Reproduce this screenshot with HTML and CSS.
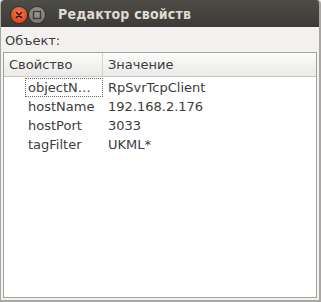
FILE: index.html
```html
<!DOCTYPE html>
<html>
<head>
<meta charset="utf-8">
<link rel="stylesheet" href="styles.css">
</head>
<body>
<div class="window">
  <div class="titlebar">
    <div class="buttons">
      <span class="btn close"><svg width="10" height="10" viewBox="0 0 10 10"><path d="M2.5 2.5 L7.5 7.5 M7.5 2.5 L2.5 7.5" stroke="#3a1a10" stroke-width="1.6" stroke-linecap="round"/></svg></span>
      <span class="btn mini"><svg width="10" height="10" viewBox="0 0 10 10"><rect x="1.5" y="1.5" width="7" height="7" fill="none" stroke="#3c3b37" stroke-width="1.4"/></svg></span>
    </div>
    <div class="title">Редактор свойств</div>
  </div>
  <div class="content">
    <div class="label">Объект:</div>
    <div class="frame">
      <div class="header">
        <div class="hcell col1">Свойство</div>
        <div class="hcell col2">Значение</div>
      </div>
      <div class="rows">
        <div class="row"><div class="cell col1"><span class="focus">objectN…</span></div><div class="cell col2">RpSvrTcpClient</div></div>
        <div class="row"><div class="cell col1"><span class="name">hostName</span></div><div class="cell col2">192.168.2.176</div></div>
        <div class="row"><div class="cell col1"><span class="name">hostPort</span></div><div class="cell col2">3033</div></div>
        <div class="row"><div class="cell col1"><span class="name">tagFilter</span></div><div class="cell col2">UKML*</div></div>
      </div>
    </div>
  </div>
</div>
</body>
</html>
```
FILE: styles.css
```css
html, body {
  margin: 0;
  padding: 0;
  background: #f2f1f0;
}
.window {
  width: 321px;
  height: 302px;
  box-sizing: border-box;
  border-left: 1px solid #a8a7a4;
  border-right: 2px solid #a8a7a4;
  border-bottom: 2px solid #a8a7a4;
  border-top-left-radius: 4px;
  border-top-right-radius: 4px;
  display: flex;
  flex-direction: column;
  background: #f2f1f0;
  font-family: "DejaVu Sans", sans-serif;
  color: #3c3c3c;
  overflow: hidden;
}
.titlebar {
  height: 27px;
  flex: none;
  box-sizing: border-box;
  padding-top: 3px;
  background: linear-gradient(#4d4c47, #3c3b37);
  display: flex;
  align-items: center;
  margin: 0 -2px 0 -1px;
  border-top-left-radius: 4px;
  border-top-right-radius: 4px;
}
.buttons {
  display: flex;
  gap: 2px;
  margin-left: 11px;
}
.btn {
  width: 16px;
  height: 16px;
  border-radius: 50%;
  display: flex;
  align-items: center;
  justify-content: center;
}
.close {
  background: radial-gradient(circle at 50% 35%, #f77a50, #df4a1e 70%, #c43e16);
  box-shadow: 0 0 0 1px #2e2d2a;
}
.mini {
  background: radial-gradient(circle at 50% 35%, #9a9893, #7d7b76 70%, #6c6a66);
  box-shadow: 0 0 0 1px #2e2d2a;
}
.title {
  margin-left: 13px;
  margin-top: -2px;
  font-family: "DejaVu Sans Condensed", "DejaVu Sans", sans-serif;
  font-stretch: condensed;
  font-weight: bold;
  font-size: 14px;
  color: #dfdbd2;
  letter-spacing: 0.2px;
}
.content {
  flex: 1;
  display: flex;
  flex-direction: column;
  padding: 0 2px 2px 2px;
}
.label {
  height: 25px;
  line-height: 28px;
  font-size: 13px;
  padding-left: 2px;
}
.frame {
  flex: 1;
  border: 1px solid #a5a39f;
  background: #ffffff;
  display: flex;
  flex-direction: column;
}
.header {
  display: flex;
  height: 23px;
  background: linear-gradient(#fbfbfa, #ebeae8);
  border-bottom: 1px solid #c8c6c2;
}
.hcell {
  font-size: 13px;
  line-height: 23px;
  box-sizing: border-box;
}
.col1 {
  width: 99px;
  flex: none;
}
.hcell.col1 {
  padding-left: 5px;
  border-right: 1px solid #d6d4d0;
}
.hcell.col2 {
  padding-left: 5px;
}
.rows {
  padding-top: 1px;
}
.row {
  display: flex;
  height: 19px;
}
.cell {
  font-size: 13px;
  line-height: 19px;
  box-sizing: border-box;
  white-space: nowrap;
}
.cell.col1 {
  padding-left: 21px;
}
.cell.col2 {
  padding-left: 5px;
}
.focus {
  display: block;
  outline: 1px dotted #6a6a6a;
  outline-offset: -1px;
  padding-left: 3px;
  height: 19px;
}
.name {
  padding-left: 3px;
}
```
